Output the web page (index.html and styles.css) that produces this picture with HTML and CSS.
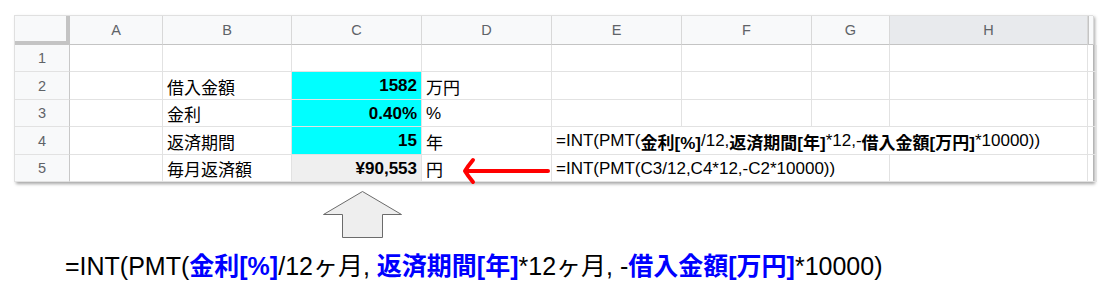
FILE: index.html
```html
<!DOCTYPE html>
<html lang="ja">
<head>
<meta charset="utf-8">
<title>PMT</title>
<link rel="stylesheet" href="styles.css">
</head>
<body>
<div class="sheet">
  <div class="grid">
    <div class="corner"></div>
    <div class="hd">A</div>
    <div class="hd">B</div>
    <div class="hd">C</div>
    <div class="hd">D</div>
    <div class="hd">E</div>
    <div class="hd">F</div>
    <div class="hd">G</div>
    <div class="hd sel">H</div>
    <div class="hd sliver"></div>

    <div class="rh">1</div>
    <div class="cell"></div><div class="cell"></div><div class="cell"></div><div class="cell"></div>
    <div class="cell"></div><div class="cell"></div><div class="cell"></div><div class="cell"></div><div class="cell"></div>

    <div class="rh">2</div>
    <div class="cell"></div>
    <div class="cell">借入金額</div>
    <div class="cell in num">1582</div>
    <div class="cell">万円</div>
    <div class="cell"></div><div class="cell"></div><div class="cell"></div><div class="cell"></div><div class="cell"></div>

    <div class="rh">3</div>
    <div class="cell"></div>
    <div class="cell">金利</div>
    <div class="cell in num">0.40%</div>
    <div class="cell">%</div>
    <div class="cell"></div><div class="cell"></div><div class="cell"></div><div class="cell"></div><div class="cell"></div>

    <div class="rh">4</div>
    <div class="cell"></div>
    <div class="cell">返済期間</div>
    <div class="cell in num">15</div>
    <div class="cell">年</div>
    <div class="cell span4">=INT(PMT(<b>金利[%]</b>/12,<b>返済期間[年]</b>*12,-<b>借入金額[万円]</b>*10000))</div>
    <div class="cell"></div>

    <div class="rh">5</div>
    <div class="cell"></div>
    <div class="cell">毎月返済額</div>
    <div class="cell out num">¥90,553</div>
    <div class="cell">円</div>
    <div class="cell span3">=INT(PMT(C3/12,C4*12,-C2*10000))</div>
    <div class="cell"></div>
    <div class="cell"></div>
  </div>
  <svg class="red-arrow" width="92" height="28" viewBox="0 0 92 28">
    <path d="M5 14 H87" stroke="#ff0000" stroke-width="4" stroke-linecap="round" fill="none"/>
    <path d="M12 3 Q7 9 4 14 Q7 19 12 25" stroke="#ff0000" stroke-width="4" stroke-linecap="round" stroke-linejoin="round" fill="none"/>
  </svg>
</div>

<div class="up-arrow">
  <svg width="82" height="50" viewBox="0 0 82 50">
    <polygon points="40.5,1.5 1.5,24.5 20.5,24.5 20.5,47.5 60.5,47.5 60.5,24.5 79.5,24.5" fill="#eeeeee" stroke="#6b6b6b" stroke-width="1"/>
  </svg>
</div>

<p class="formula">=INT(PMT(<b>金利[%]</b>/12ヶ月, <b>返済期間[年]</b>*12ヶ月, -<b>借入金額[万円]</b>*10000)</p>
</body>
</html>
```
FILE: styles.css
```css
* { box-sizing: border-box; }
html, body { margin: 0; padding: 0; background: #fff; }
body {
  font-family: "Liberation Sans", Arial, "Noto Sans CJK JP", sans-serif;
  color: #000;
  width: 1104px;
  height: 300px;
  overflow: hidden;
}
.sheet {
  position: relative;
  margin: 15px 0 0 14px;
  width: 1079px;
  box-shadow: 2px 2px 3px rgba(0,0,0,0.35);
  border-top: 1px solid #e0e0e0;
  border-left: 1px solid #e0e0e0;
}
.grid {
  display: grid;
  grid-template-columns: 55px 93px 129px 130px 130px 130px 130px 78px 198px 6px;
  grid-template-rows: 29px 27px 28px 27px 28px 27px;
}
.corner {
  background: #f8f9fa;
  border-right: 4px solid #c4c4c4;
  border-bottom: 4px solid #c4c4c4;
}
.hd {
  background: #f8f9fa;
  color: #5f6368;
  font-size: 14.5px;
  display: flex;
  align-items: center;
  justify-content: center;
  border-right: 1px solid #d8d8d8;
  border-bottom: 1px solid #c4c4c4;
}
.hd.sel { background: #e8eaed; }
.hd.sliver { border-left: 1px solid #c4c4c4; }
.rh {
  background: #f8f9fa;
  color: #5f6368;
  font-size: 14.5px;
  display: flex;
  align-items: center;
  justify-content: center;
  border-right: 1px solid #c8c8c8;
  border-bottom: 1px solid #e2e2e2;
}
.cell {
  font-size: 17px;
  display: flex;
  align-items: center;
  padding: 1px 4px 0;
  white-space: nowrap;
  border-right: 1px solid #e2e2e2;
  border-bottom: 1px solid #e2e2e2;
}
.cell b { font-weight: bold; }
.in { background: #00ffff; }
.out { background: #efefef; }
.num { justify-content: flex-end; font-weight: bold; }
.span4 { grid-column: span 4; }
.span3 { grid-column: span 3; }
.red-arrow {
  position: absolute;
  left: 446px;
  top: 141px;
}
.up-arrow {
  margin: 8px 0 0 322px;
  height: 50px;
}
.up-arrow svg { display: block; }
.formula {
  margin: 11px 0 0 65px;
  font-size: 25px;
  line-height: 30px;
  white-space: nowrap;
}
.formula b { color: #0000ff; font-weight: bold; }
```
